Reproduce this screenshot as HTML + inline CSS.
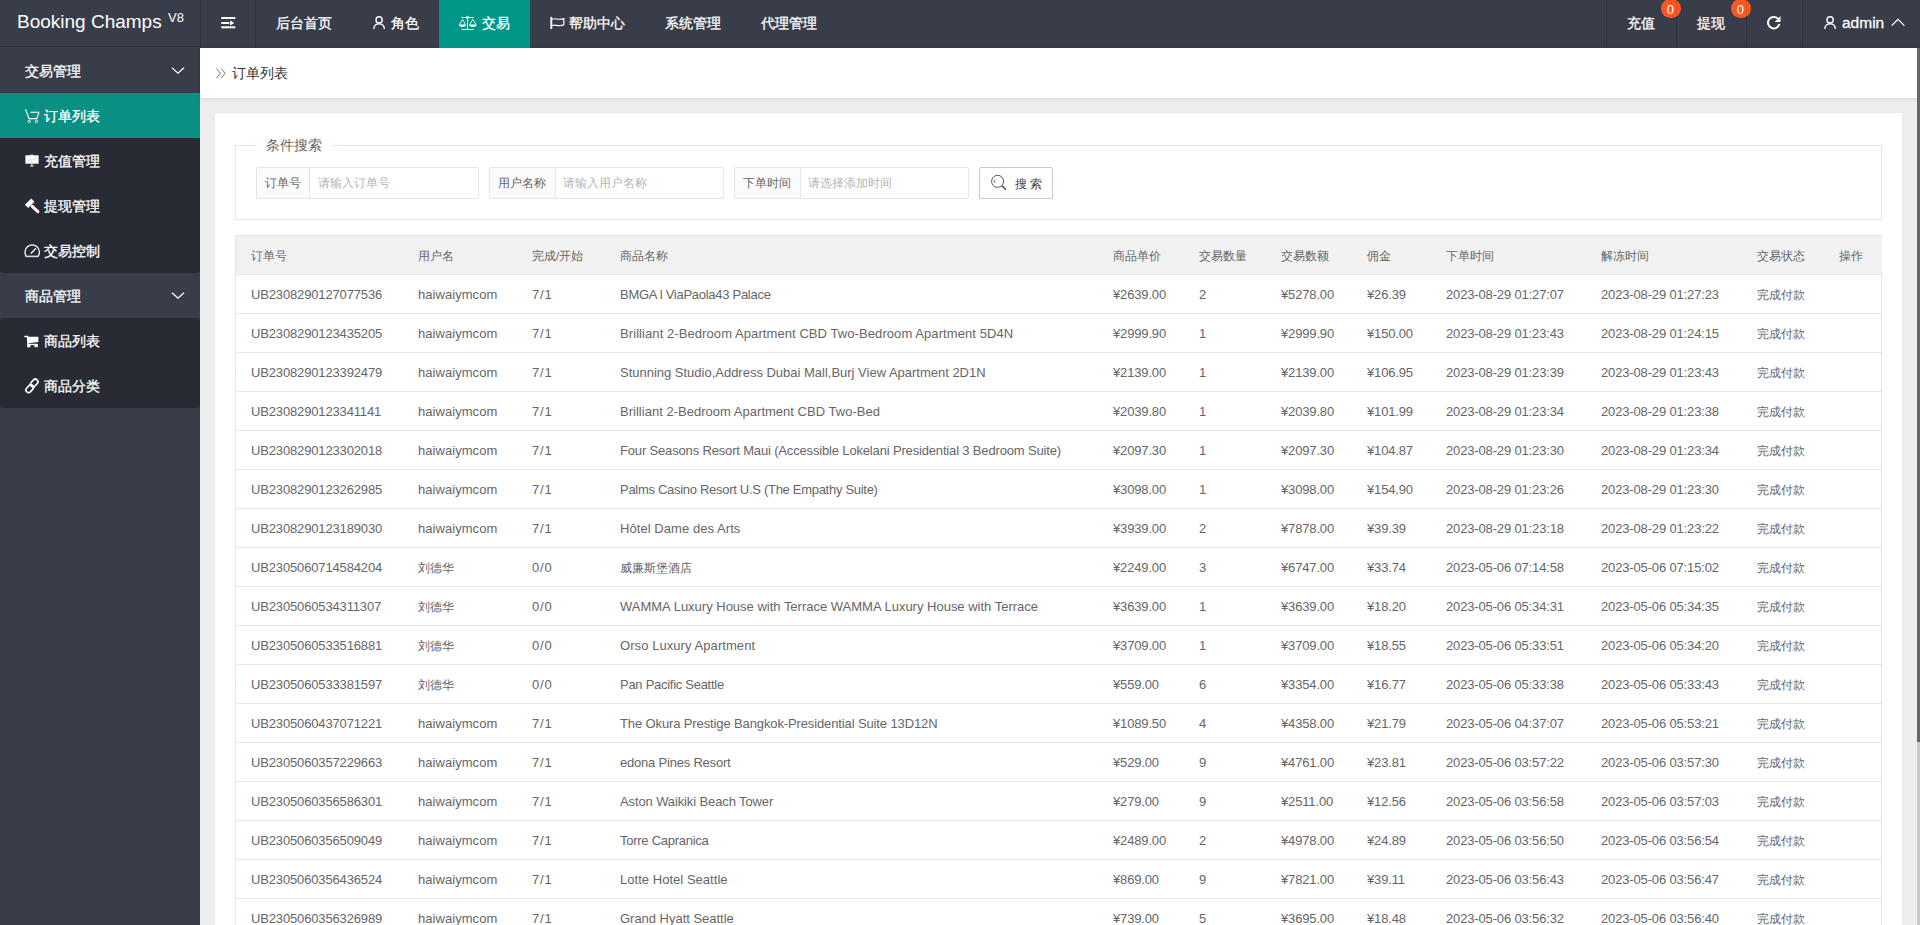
<!DOCTYPE html>
<html><head><meta charset="utf-8">
<style>
*{margin:0;padding:0;box-sizing:border-box}
html,body{width:1920px;height:925px;overflow:hidden;font-family:"Liberation Sans",sans-serif;background:#eeeeee;position:relative}
div,span,svg{position:absolute}
.w{color:#fff;white-space:nowrap}
#hdr{left:0;top:0;width:1920px;height:48px;background:#393d49}
.sep{top:0;width:1px;height:48px;background:#30333d}
.nt{top:15px;font-size:14px;line-height:16px;color:#fff;white-space:nowrap;-webkit-text-stroke:0.3px #fff}
.badge{width:19.5px;height:19.5px;border-radius:50%;background:#ff5722;color:#fff;font-size:13px;line-height:21px;text-align:center;text-indent:-0.8px}
#side{left:0;top:48px;width:200px;height:877px;background:#393d49}
.grp{left:0;width:200px;height:45px;background:#393d49;border-radius:2px}
.it{left:0;width:200px;height:45px;background:#282b33;border-radius:3px}
.it.on{background:#0a9082;border-radius:0}
.st{left:44px;font-size:14px;line-height:16px;color:#fff;white-space:nowrap;margin-top:-2px;-webkit-text-stroke:0.3px #fff}
#crumb{left:200px;top:48px;width:1717px;height:50px;background:#fff;box-shadow:0 1px 5px rgba(0,0,0,.09)}
#card{left:215px;top:113px;width:1687px;height:812px;background:#fff;box-shadow:0 0 3px rgba(0,0,0,.05)}
#fs{left:235px;top:145px;width:1647px;height:75px;border:1px solid #e6e6e6}
.lg{left:256px;top:137px;width:76px;height:16px;background:#fff}
.ig{top:167px;height:32px;border:1px solid #e6e6e6;border-radius:2px;background:#fff}
.lab{left:0;top:0;height:30px;background:#fbfbfb;border-right:1px solid #e6e6e6;border-radius:2px 0 0 2px}
.lt{top:7px;font-size:12px;line-height:14px;color:#666;white-space:nowrap}
.ph{top:7px;font-size:12px;line-height:14px;color:#b5b5b5;white-space:nowrap}
.th{left:236px;width:1646px;height:38px;background:#f2f2f2}
.tbor{left:235px;top:235px;width:1647px;height:690px;border:1px solid #e6e6e6;border-bottom:none}
.tr{left:236px;width:1646px;height:1px;background:#e6e6e6}
.tt{height:39px;line-height:40px;font-size:13px;color:#666;white-space:nowrap;letter-spacing:-0.15px}
.tt.h{height:38px;line-height:41px}
.tt.cj{font-size:11.5px;letter-spacing:0}
#sb{left:1917px;top:48px;width:3px;height:877px;background:#c8c8c8}
#sbt{left:1917px;top:48px;width:3px;height:694px;background:#666}
</style></head><body>
<div id="hdr">
  <div style="left:0;top:0;width:200px;height:47px;border-bottom:1px solid #30333d"></div>
  <div class="w" style="left:17px;top:11px;font-size:19px;line-height:22px">Booking Champs</div>
  <div class="w" style="left:168px;top:11px;font-size:13px;line-height:14px">V8</div>
  <div class="sep" style="left:200px"></div>
  <div class="sep" style="left:255px"></div>
  <svg style="left:220px;top:15px" width="16" height="16" viewBox="0 0 16 16"><rect x="1.3" y="2" width="14" height="2" fill="#fff"/><rect x="1.3" y="7" width="8" height="2" fill="#fff"/><path d="M10 5.6 L14.4 8 L10 10.4Z" fill="#fff"/><rect x="1.3" y="11.3" width="14" height="2" fill="#fff"/></svg>
  <div class="nt" style="left:276px">后台首页</div>
  <svg style="left:372px;top:15px" width="14" height="15" viewBox="0 0 14 15"><circle cx="7.1" cy="4.9" r="3.1" fill="none" stroke="#fff" stroke-width="1.4"/><path d="M1.8 14 C2 10.6 4.3 8.9 7.1 8.9 C9.9 8.9 12.2 10.6 12.4 14" fill="none" stroke="#fff" stroke-width="1.4"/></svg>
  <div class="nt" style="left:391px">角色</div>
  <div style="left:439px;top:0;width:91px;height:48px;background:#009688"></div>
  <svg style="left:458px;top:15px" width="20" height="16" viewBox="0 0 20 16"><path d="M3.6 2.45 H15.6 M9.5 3.6 V14.5 M3.6 14.5 H15.6" stroke="#fff" stroke-width="1.1" fill="none"/><circle cx="9.5" cy="2.45" r="1.2" fill="none" stroke="#fff" stroke-width="0.9"/><path d="M4.5 4.3 L1.3 9.8 M4.5 4.3 L7.6 9.8 M14.8 4.3 L11.5 9.8 M14.8 4.3 L18.2 9.8" stroke="#fff" stroke-width="0.9" fill="none"/><path d="M0.9 9.6 H7.9 A3.5 2.4 0 0 1 0.9 9.6Z M11.1 9.6 H18.5 A3.7 2.4 0 0 1 11.1 9.6Z" fill="#fff"/></svg>
  <div class="nt" style="left:482px">交易</div>
  <svg style="left:549px;top:16px" width="17" height="14" viewBox="0 0 17 14"><path d="M2.3 0.9 V13" stroke="#fff" stroke-width="1.9"/><path d="M3 3.2 C6.5 1.6 9.5 4.6 14.8 2.6 V8.9 C9.5 10.9 6.5 7.9 3 9.5" fill="none" stroke="#fff" stroke-width="1.2"/></svg>
  <div class="nt" style="left:569px">帮助中心</div>
  <div class="nt" style="left:665px">系统管理</div>
  <div class="nt" style="left:761px">代理管理</div>

  <div class="nt" style="left:1627px">充值</div>
  <div class="nt" style="left:1697px">提现</div>
  <div class="sep" style="left:1606px"></div>
  <div class="sep" style="left:1676px"></div>
  <div class="sep" style="left:1746px"></div>
  <div class="sep" style="left:1802px"></div>
  <div class="badge" style="left:1661px;top:-1.5px">0</div>
  <div class="badge" style="left:1731px;top:-1.5px">0</div>
  <div style="left:1676px;top:0;width:1px;height:19px;background:rgba(0,0,0,.12)"></div>
  <div style="left:1746px;top:0;width:1px;height:19px;background:rgba(0,0,0,.12)"></div>
  <svg style="left:1766px;top:15px" width="16" height="15" viewBox="0 0 16 15"><path d="M11.9 3.6 A5.75 5.75 0 1 0 13.4 9.0" fill="none" stroke="#fff" stroke-width="2"/><path d="M8.6 6.9 L14.5 6.9 L14.5 0.9Z" fill="#fff"/></svg>
  <svg style="left:1823px;top:15px" width="14" height="15" viewBox="0 0 14 15"><circle cx="7.1" cy="4.9" r="3.1" fill="none" stroke="#fff" stroke-width="1.4"/><path d="M1.8 14 C2 10.6 4.3 8.9 7.1 8.9 C9.9 8.9 12.2 10.6 12.4 14" fill="none" stroke="#fff" stroke-width="1.4"/></svg>
  <div class="nt" style="left:1842px;top:14px;font-size:15.5px;line-height:18px">admin</div>
  <svg style="left:1891px;top:18px" width="15" height="9" viewBox="0 0 15 9"><path d="M0.6 7.6 L7 1.4 L13.4 7.6" fill="none" stroke="#fff" stroke-width="1.3"/></svg>
</div>

<div id="side">
  <div class="grp" style="top:0"></div>
  <div class="st" style="left:25px;top:17px">交易管理</div>
  <svg style="left:171px;top:18px" width="14" height="9" viewBox="0 0 14 9"><path d="M1 1.8 L7 7.3 L13 1.8" fill="none" stroke="#fff" stroke-width="1.2"/></svg>
  <div class="it on" style="top:45px"></div>
  <div class="it" style="top:90px;height:135px;border-radius:0 0 3px 3px"></div>
  <svg style="left:24px;top:58px" width="17" height="18" viewBox="0 0 17 18"><path d="M1.5 3.2 L5 12.6 H12.9 L14.9 6.3 H6.4" fill="none" stroke="#fff" stroke-width="1.1" stroke-linejoin="miter"/><circle cx="5.2" cy="15.4" r="1.2" fill="none" stroke="#fff" stroke-width="0.9"/><circle cx="12.4" cy="15.4" r="1.2" fill="none" stroke="#fff" stroke-width="0.9"/></svg>
  <div class="st" style="top:62px">订单列表</div>
  <svg style="left:24px;top:106px" width="16" height="14" viewBox="0 0 16 14"><rect x="6" y="0.6" width="3.5" height="1" fill="#ddd"/><rect x="1.4" y="1.3" width="13.2" height="8.4" fill="#fff"/><path d="M3.5 7 L6 5.4 L8 6.3 L12 3.8" stroke="#c8c8c8" stroke-width="0.8" fill="none"/><path d="M7.9 9.7 V11.8 M6.2 12 H9.6" stroke="#fff" stroke-width="1"/></svg>
  <div class="st" style="top:107px">充值管理</div>
  <svg style="left:24px;top:150px" width="17" height="17" viewBox="0 0 17 17"><rect x="1.2" y="3" width="9" height="4.6" transform="rotate(-45 5.7 5.3)" fill="#fff"/><path d="M8.2 8.3 L13.9 13.7" stroke="#fff" stroke-width="3" stroke-linecap="round"/></svg>
  <div class="st" style="top:152px">提现管理</div>
  <svg style="left:24px;top:196px" width="17" height="14" viewBox="0 0 17 14"><path d="M2.3 12.3 A7.2 7.2 0 1 1 14.1 12.3" fill="none" stroke="#fff" stroke-width="1.3"/><path d="M1.6 12.4 H14.8" stroke="#d8d8d8" stroke-width="1.6"/><path d="M7.3 9 L11.5 4.8" stroke="#fff" stroke-width="1.4" stroke-linecap="round"/></svg>
  <div class="st" style="top:197px">交易控制</div>
  <div class="grp" style="top:225px"></div>
  <div class="st" style="left:25px;top:242px">商品管理</div>
  <svg style="left:171px;top:243px" width="14" height="9" viewBox="0 0 14 9"><path d="M1 1.8 L7 7.3 L13 1.8" fill="none" stroke="#fff" stroke-width="1.2"/></svg>
  <div class="it" style="top:270px;height:90px"></div>
  <svg style="left:24px;top:287px" width="16" height="13" viewBox="0 0 16 13"><rect x="0.2" y="0.8" width="4" height="1.4" fill="#fff"/><path d="M3.6 1.2 L4.2 12.2" stroke="#fff" stroke-width="1.6"/><path d="M3.5 1.7 H14.4 V7 L4.2 8.2Z" fill="#fff"/><rect x="3.6" y="8.8" width="10" height="1.3" fill="#fff"/><rect x="3.6" y="9.2" width="2.8" height="3" fill="#fff"/><rect x="10.4" y="9.2" width="3.4" height="3" fill="#fff"/></svg>
  <div class="st" style="top:287px">商品列表</div>
  <svg style="left:24px;top:329px" width="17" height="17" viewBox="0 0 17 17"><rect x="5.9" y="3.4" width="8.6" height="5.2" rx="2.6" transform="rotate(-48 10.2 6)" fill="none" stroke="#fff" stroke-width="1.7"/><rect x="1.4" y="9.1" width="8.6" height="5.2" rx="2.6" transform="rotate(-48 5.7 11.7)" fill="none" stroke="#fff" stroke-width="1.7"/></svg>
  <div class="st" style="top:332px">商品分类</div>
</div>

<div id="crumb"></div>
<svg style="left:215px;top:67px" width="12" height="12" viewBox="0 0 12 12"><path d="M1.4 1.5 L5.5 6.3 L1.4 11.1 M6.1 1.5 L10.2 6.3 L6.1 11.1" fill="none" stroke="#999" stroke-width="1.1"/></svg>
<div style="left:232px;top:65px;font-size:14px;line-height:16px;color:#333;white-space:nowrap">订单列表</div>

<div id="card"></div>
<div id="fs"></div>
<div class="lg"></div>
<div style="left:266px;top:137px;font-size:14px;line-height:16px;color:#666;white-space:nowrap">条件搜索</div>

<div class="ig" style="left:256px;width:223px"><div class="lab" style="width:53px"></div></div>
<div class="lt" style="left:265px;top:176px">订单号</div>
<div class="ph" style="left:318px;top:176px">请输入订单号</div>
<div class="ig" style="left:489px;width:235px"><div class="lab" style="width:66px"></div></div>
<div class="lt" style="left:498px;top:176px">用户名称</div>
<div class="ph" style="left:563px;top:176px">请输入用户名称</div>
<div class="ig" style="left:734px;width:235px"><div class="lab" style="width:66px"></div></div>
<div class="lt" style="left:743px;top:176px">下单时间</div>
<div class="ph" style="left:808px;top:176px">请选择添加时间</div>
<div style="left:979px;top:167px;width:74px;height:32px;border:1px solid #c9c9c9;border-radius:2px;background:#fff"></div>
<svg style="left:990px;top:174px" width="18" height="18" viewBox="0 0 18 18"><circle cx="7.6" cy="7.3" r="6" fill="none" stroke="#555" stroke-width="1"/><path d="M12 11.8 L16 15.8" stroke="#555" stroke-width="1.6"/><path d="M5 5.5 A3 3 0 0 0 5 9" fill="none" stroke="#555" stroke-width="0.8"/></svg>
<div style="left:1014.5px;top:177px;font-size:12px;line-height:14px;color:#444;white-space:nowrap;letter-spacing:3.6px">搜索</div>

<div class="tbor"></div>
<div class="th" style="top:236px"></div>
<div class="tt h cj" style="left:251px;top:236px">订单号</div>
<div class="tt h cj" style="left:418px;top:236px">用户名</div>
<div class="tt h cj" style="left:532px;top:236px">完成/开始</div>
<div class="tt h cj" style="left:620px;top:236px">商品名称</div>
<div class="tt h cj" style="left:1113px;top:236px">商品单价</div>
<div class="tt h cj" style="left:1199px;top:236px">交易数量</div>
<div class="tt h cj" style="left:1281px;top:236px">交易数额</div>
<div class="tt h cj" style="left:1367px;top:236px">佣金</div>
<div class="tt h cj" style="left:1446px;top:236px">下单时间</div>
<div class="tt h cj" style="left:1601px;top:236px">解冻时间</div>
<div class="tt h cj" style="left:1757px;top:236px">交易状态</div>
<div class="tt h cj" style="left:1839px;top:236px">操作</div>
<div class="tr" style="top:274px"></div>
<div class="tt" style="left:251px;top:275px">UB2308290127077536</div>
<div class="tt" style="left:418px;top:275px;letter-spacing:0.05px">haiwaiymcom</div>
<div class="tt" style="left:532px;top:275px;letter-spacing:0.8px">7/1</div>
<div class="tt" style="left:620px;top:275px;letter-spacing:-0.280px">BMGA l ViaPaola43 Palace</div>
<div class="tt" style="left:1113px;top:275px">¥2639.00</div>
<div class="tt" style="left:1199px;top:275px">2</div>
<div class="tt" style="left:1281px;top:275px">¥5278.00</div>
<div class="tt" style="left:1367px;top:275px">¥26.39</div>
<div class="tt" style="left:1446px;top:275px">2023-08-29 01:27:07</div>
<div class="tt" style="left:1601px;top:275px">2023-08-29 01:27:23</div>
<div class="tt cj" style="left:1757px;top:275px">完成付款</div>
<div class="tr" style="top:313px"></div>
<div class="tt" style="left:251px;top:314px">UB2308290123435205</div>
<div class="tt" style="left:418px;top:314px;letter-spacing:0.05px">haiwaiymcom</div>
<div class="tt" style="left:532px;top:314px;letter-spacing:0.8px">7/1</div>
<div class="tt" style="left:620px;top:314px;letter-spacing:0.079px">Brilliant 2-Bedroom Apartment CBD Two-Bedroom Apartment 5D4N</div>
<div class="tt" style="left:1113px;top:314px">¥2999.90</div>
<div class="tt" style="left:1199px;top:314px">1</div>
<div class="tt" style="left:1281px;top:314px">¥2999.90</div>
<div class="tt" style="left:1367px;top:314px">¥150.00</div>
<div class="tt" style="left:1446px;top:314px">2023-08-29 01:23:43</div>
<div class="tt" style="left:1601px;top:314px">2023-08-29 01:24:15</div>
<div class="tt cj" style="left:1757px;top:314px">完成付款</div>
<div class="tr" style="top:352px"></div>
<div class="tt" style="left:251px;top:353px">UB2308290123392479</div>
<div class="tt" style="left:418px;top:353px;letter-spacing:0.05px">haiwaiymcom</div>
<div class="tt" style="left:532px;top:353px;letter-spacing:0.8px">7/1</div>
<div class="tt" style="left:620px;top:353px;letter-spacing:-0.009px">Stunning Studio,Address Dubai Mall,Burj View Apartment 2D1N</div>
<div class="tt" style="left:1113px;top:353px">¥2139.00</div>
<div class="tt" style="left:1199px;top:353px">1</div>
<div class="tt" style="left:1281px;top:353px">¥2139.00</div>
<div class="tt" style="left:1367px;top:353px">¥106.95</div>
<div class="tt" style="left:1446px;top:353px">2023-08-29 01:23:39</div>
<div class="tt" style="left:1601px;top:353px">2023-08-29 01:23:43</div>
<div class="tt cj" style="left:1757px;top:353px">完成付款</div>
<div class="tr" style="top:391px"></div>
<div class="tt" style="left:251px;top:392px">UB2308290123341141</div>
<div class="tt" style="left:418px;top:392px;letter-spacing:0.05px">haiwaiymcom</div>
<div class="tt" style="left:532px;top:392px;letter-spacing:0.8px">7/1</div>
<div class="tt" style="left:620px;top:392px;letter-spacing:0.020px">Brilliant 2-Bedroom Apartment CBD Two-Bed</div>
<div class="tt" style="left:1113px;top:392px">¥2039.80</div>
<div class="tt" style="left:1199px;top:392px">1</div>
<div class="tt" style="left:1281px;top:392px">¥2039.80</div>
<div class="tt" style="left:1367px;top:392px">¥101.99</div>
<div class="tt" style="left:1446px;top:392px">2023-08-29 01:23:34</div>
<div class="tt" style="left:1601px;top:392px">2023-08-29 01:23:38</div>
<div class="tt cj" style="left:1757px;top:392px">完成付款</div>
<div class="tr" style="top:430px"></div>
<div class="tt" style="left:251px;top:431px">UB2308290123302018</div>
<div class="tt" style="left:418px;top:431px;letter-spacing:0.05px">haiwaiymcom</div>
<div class="tt" style="left:532px;top:431px;letter-spacing:0.8px">7/1</div>
<div class="tt" style="left:620px;top:431px;letter-spacing:-0.162px">Four Seasons Resort Maui (Accessible Lokelani Presidential 3 Bedroom Suite)</div>
<div class="tt" style="left:1113px;top:431px">¥2097.30</div>
<div class="tt" style="left:1199px;top:431px">1</div>
<div class="tt" style="left:1281px;top:431px">¥2097.30</div>
<div class="tt" style="left:1367px;top:431px">¥104.87</div>
<div class="tt" style="left:1446px;top:431px">2023-08-29 01:23:30</div>
<div class="tt" style="left:1601px;top:431px">2023-08-29 01:23:34</div>
<div class="tt cj" style="left:1757px;top:431px">完成付款</div>
<div class="tr" style="top:469px"></div>
<div class="tt" style="left:251px;top:470px">UB2308290123262985</div>
<div class="tt" style="left:418px;top:470px;letter-spacing:0.05px">haiwaiymcom</div>
<div class="tt" style="left:532px;top:470px;letter-spacing:0.8px">7/1</div>
<div class="tt" style="left:620px;top:470px;letter-spacing:-0.293px">Palms Casino Resort U.S (The Empathy Suite)</div>
<div class="tt" style="left:1113px;top:470px">¥3098.00</div>
<div class="tt" style="left:1199px;top:470px">1</div>
<div class="tt" style="left:1281px;top:470px">¥3098.00</div>
<div class="tt" style="left:1367px;top:470px">¥154.90</div>
<div class="tt" style="left:1446px;top:470px">2023-08-29 01:23:26</div>
<div class="tt" style="left:1601px;top:470px">2023-08-29 01:23:30</div>
<div class="tt cj" style="left:1757px;top:470px">完成付款</div>
<div class="tr" style="top:508px"></div>
<div class="tt" style="left:251px;top:509px">UB2308290123189030</div>
<div class="tt" style="left:418px;top:509px;letter-spacing:0.05px">haiwaiymcom</div>
<div class="tt" style="left:532px;top:509px;letter-spacing:0.8px">7/1</div>
<div class="tt" style="left:620px;top:509px;letter-spacing:0.061px">Hôtel Dame des Arts</div>
<div class="tt" style="left:1113px;top:509px">¥3939.00</div>
<div class="tt" style="left:1199px;top:509px">2</div>
<div class="tt" style="left:1281px;top:509px">¥7878.00</div>
<div class="tt" style="left:1367px;top:509px">¥39.39</div>
<div class="tt" style="left:1446px;top:509px">2023-08-29 01:23:18</div>
<div class="tt" style="left:1601px;top:509px">2023-08-29 01:23:22</div>
<div class="tt cj" style="left:1757px;top:509px">完成付款</div>
<div class="tr" style="top:547px"></div>
<div class="tt" style="left:251px;top:548px">UB2305060714584204</div>
<div class="tt cj" style="left:418px;top:548px">刘德华</div>
<div class="tt" style="left:532px;top:548px;letter-spacing:0.8px">0/0</div>
<div class="tt cj" style="left:620px;top:548px">威廉斯堡酒店</div>
<div class="tt" style="left:1113px;top:548px">¥2249.00</div>
<div class="tt" style="left:1199px;top:548px">3</div>
<div class="tt" style="left:1281px;top:548px">¥6747.00</div>
<div class="tt" style="left:1367px;top:548px">¥33.74</div>
<div class="tt" style="left:1446px;top:548px">2023-05-06 07:14:58</div>
<div class="tt" style="left:1601px;top:548px">2023-05-06 07:15:02</div>
<div class="tt cj" style="left:1757px;top:548px">完成付款</div>
<div class="tr" style="top:586px"></div>
<div class="tt" style="left:251px;top:587px">UB2305060534311307</div>
<div class="tt cj" style="left:418px;top:587px">刘德华</div>
<div class="tt" style="left:532px;top:587px;letter-spacing:0.8px">0/0</div>
<div class="tt" style="left:620px;top:587px;letter-spacing:-0.005px">WAMMA Luxury House with Terrace WAMMA Luxury House with Terrace</div>
<div class="tt" style="left:1113px;top:587px">¥3639.00</div>
<div class="tt" style="left:1199px;top:587px">1</div>
<div class="tt" style="left:1281px;top:587px">¥3639.00</div>
<div class="tt" style="left:1367px;top:587px">¥18.20</div>
<div class="tt" style="left:1446px;top:587px">2023-05-06 05:34:31</div>
<div class="tt" style="left:1601px;top:587px">2023-05-06 05:34:35</div>
<div class="tt cj" style="left:1757px;top:587px">完成付款</div>
<div class="tr" style="top:625px"></div>
<div class="tt" style="left:251px;top:626px">UB2305060533516881</div>
<div class="tt cj" style="left:418px;top:626px">刘德华</div>
<div class="tt" style="left:532px;top:626px;letter-spacing:0.8px">0/0</div>
<div class="tt" style="left:620px;top:626px;letter-spacing:0.070px">Orso Luxury Apartment</div>
<div class="tt" style="left:1113px;top:626px">¥3709.00</div>
<div class="tt" style="left:1199px;top:626px">1</div>
<div class="tt" style="left:1281px;top:626px">¥3709.00</div>
<div class="tt" style="left:1367px;top:626px">¥18.55</div>
<div class="tt" style="left:1446px;top:626px">2023-05-06 05:33:51</div>
<div class="tt" style="left:1601px;top:626px">2023-05-06 05:34:20</div>
<div class="tt cj" style="left:1757px;top:626px">完成付款</div>
<div class="tr" style="top:664px"></div>
<div class="tt" style="left:251px;top:665px">UB2305060533381597</div>
<div class="tt cj" style="left:418px;top:665px">刘德华</div>
<div class="tt" style="left:532px;top:665px;letter-spacing:0.8px">0/0</div>
<div class="tt" style="left:620px;top:665px;letter-spacing:-0.278px">Pan Pacific Seattle</div>
<div class="tt" style="left:1113px;top:665px">¥559.00</div>
<div class="tt" style="left:1199px;top:665px">6</div>
<div class="tt" style="left:1281px;top:665px">¥3354.00</div>
<div class="tt" style="left:1367px;top:665px">¥16.77</div>
<div class="tt" style="left:1446px;top:665px">2023-05-06 05:33:38</div>
<div class="tt" style="left:1601px;top:665px">2023-05-06 05:33:43</div>
<div class="tt cj" style="left:1757px;top:665px">完成付款</div>
<div class="tr" style="top:703px"></div>
<div class="tt" style="left:251px;top:704px">UB2305060437071221</div>
<div class="tt" style="left:418px;top:704px;letter-spacing:0.05px">haiwaiymcom</div>
<div class="tt" style="left:532px;top:704px;letter-spacing:0.8px">7/1</div>
<div class="tt" style="left:620px;top:704px;letter-spacing:-0.121px">The Okura Prestige Bangkok-Presidential Suite 13D12N</div>
<div class="tt" style="left:1113px;top:704px">¥1089.50</div>
<div class="tt" style="left:1199px;top:704px">4</div>
<div class="tt" style="left:1281px;top:704px">¥4358.00</div>
<div class="tt" style="left:1367px;top:704px">¥21.79</div>
<div class="tt" style="left:1446px;top:704px">2023-05-06 04:37:07</div>
<div class="tt" style="left:1601px;top:704px">2023-05-06 05:53:21</div>
<div class="tt cj" style="left:1757px;top:704px">完成付款</div>
<div class="tr" style="top:742px"></div>
<div class="tt" style="left:251px;top:743px">UB2305060357229663</div>
<div class="tt" style="left:418px;top:743px;letter-spacing:0.05px">haiwaiymcom</div>
<div class="tt" style="left:532px;top:743px;letter-spacing:0.8px">7/1</div>
<div class="tt" style="left:620px;top:743px;letter-spacing:-0.209px">edona Pines Resort</div>
<div class="tt" style="left:1113px;top:743px">¥529.00</div>
<div class="tt" style="left:1199px;top:743px">9</div>
<div class="tt" style="left:1281px;top:743px">¥4761.00</div>
<div class="tt" style="left:1367px;top:743px">¥23.81</div>
<div class="tt" style="left:1446px;top:743px">2023-05-06 03:57:22</div>
<div class="tt" style="left:1601px;top:743px">2023-05-06 03:57:30</div>
<div class="tt cj" style="left:1757px;top:743px">完成付款</div>
<div class="tr" style="top:781px"></div>
<div class="tt" style="left:251px;top:782px">UB2305060356586301</div>
<div class="tt" style="left:418px;top:782px;letter-spacing:0.05px">haiwaiymcom</div>
<div class="tt" style="left:532px;top:782px;letter-spacing:0.8px">7/1</div>
<div class="tt" style="left:620px;top:782px;letter-spacing:-0.117px">Aston Waikiki Beach Tower</div>
<div class="tt" style="left:1113px;top:782px">¥279.00</div>
<div class="tt" style="left:1199px;top:782px">9</div>
<div class="tt" style="left:1281px;top:782px">¥2511.00</div>
<div class="tt" style="left:1367px;top:782px">¥12.56</div>
<div class="tt" style="left:1446px;top:782px">2023-05-06 03:56:58</div>
<div class="tt" style="left:1601px;top:782px">2023-05-06 03:57:03</div>
<div class="tt cj" style="left:1757px;top:782px">完成付款</div>
<div class="tr" style="top:820px"></div>
<div class="tt" style="left:251px;top:821px">UB2305060356509049</div>
<div class="tt" style="left:418px;top:821px;letter-spacing:0.05px">haiwaiymcom</div>
<div class="tt" style="left:532px;top:821px;letter-spacing:0.8px">7/1</div>
<div class="tt" style="left:620px;top:821px;letter-spacing:-0.264px">Torre Capranica</div>
<div class="tt" style="left:1113px;top:821px">¥2489.00</div>
<div class="tt" style="left:1199px;top:821px">2</div>
<div class="tt" style="left:1281px;top:821px">¥4978.00</div>
<div class="tt" style="left:1367px;top:821px">¥24.89</div>
<div class="tt" style="left:1446px;top:821px">2023-05-06 03:56:50</div>
<div class="tt" style="left:1601px;top:821px">2023-05-06 03:56:54</div>
<div class="tt cj" style="left:1757px;top:821px">完成付款</div>
<div class="tr" style="top:859px"></div>
<div class="tt" style="left:251px;top:860px">UB2305060356436524</div>
<div class="tt" style="left:418px;top:860px;letter-spacing:0.05px">haiwaiymcom</div>
<div class="tt" style="left:532px;top:860px;letter-spacing:0.8px">7/1</div>
<div class="tt" style="left:620px;top:860px;letter-spacing:0.033px">Lotte Hotel Seattle</div>
<div class="tt" style="left:1113px;top:860px">¥869.00</div>
<div class="tt" style="left:1199px;top:860px">9</div>
<div class="tt" style="left:1281px;top:860px">¥7821.00</div>
<div class="tt" style="left:1367px;top:860px">¥39.11</div>
<div class="tt" style="left:1446px;top:860px">2023-05-06 03:56:43</div>
<div class="tt" style="left:1601px;top:860px">2023-05-06 03:56:47</div>
<div class="tt cj" style="left:1757px;top:860px">完成付款</div>
<div class="tr" style="top:898px"></div>
<div class="tt" style="left:251px;top:899px">UB2305060356326989</div>
<div class="tt" style="left:418px;top:899px;letter-spacing:0.05px">haiwaiymcom</div>
<div class="tt" style="left:532px;top:899px;letter-spacing:0.8px">7/1</div>
<div class="tt" style="left:620px;top:899px;letter-spacing:-0.022px">Grand Hyatt Seattle</div>
<div class="tt" style="left:1113px;top:899px">¥739.00</div>
<div class="tt" style="left:1199px;top:899px">5</div>
<div class="tt" style="left:1281px;top:899px">¥3695.00</div>
<div class="tt" style="left:1367px;top:899px">¥18.48</div>
<div class="tt" style="left:1446px;top:899px">2023-05-06 03:56:32</div>
<div class="tt" style="left:1601px;top:899px">2023-05-06 03:56:40</div>
<div class="tt cj" style="left:1757px;top:899px">完成付款</div>

<div id="sb"></div><div id="sbt"></div>
</body></html>
